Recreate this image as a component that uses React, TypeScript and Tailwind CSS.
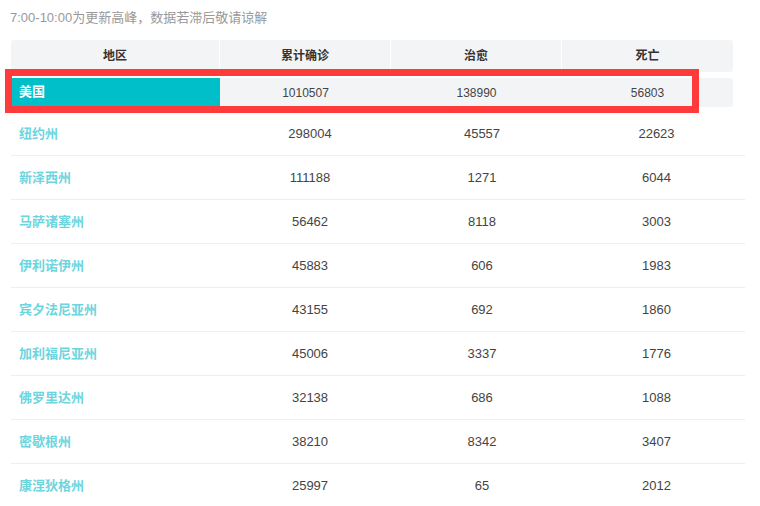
const font = "font-['Liberation_Sans','Noto_Sans_CJK_SC',sans-serif]";

const rows = [
  ["纽约州", "298004", "45557", "22623"],
  ["新泽西州", "111188", "1271", "6044"],
  ["马萨诸塞州", "56462", "8118", "3003"],
  ["伊利诺伊州", "45883", "606", "1983"],
  ["宾夕法尼亚州", "43155", "692", "1860"],
  ["加利福尼亚州", "45006", "3337", "1776"],
  ["佛罗里达州", "32138", "686", "1088"],
  ["密歇根州", "38210", "8342", "3407"],
  ["康涅狄格州", "25997", "65", "2012"],
];

export default function App() {
  return (
    <div className={`relative w-[760px] h-[506px] overflow-hidden bg-white ${font}`}>
      <p className="pl-[10px] pt-[10px] text-[13px] leading-4 text-[#999]">7:00-10:00为更新高峰，数据若滞后敬请谅解</p>

      {/* header */}
      <div className="ml-[11px] mt-[14px] flex w-[722px] h-[32px] gap-px overflow-hidden rounded-[3px] text-[12px] font-bold text-[#333]">
        <div className="w-[208px] bg-[#f3f4f6] flex items-center justify-center">地区</div>
        <div className="w-[170px] bg-[#f3f4f6] flex items-center justify-center">累计确诊</div>
        <div className="w-[170px] bg-[#f3f4f6] flex items-center justify-center">治愈</div>
        <div className="w-[171px] bg-[#f3f4f6] flex items-center justify-center">死亡</div>
      </div>

      {/* country row */}
      <div className="ml-[11px] mt-[6px] flex w-[722px] h-[29px] rounded-[3px] bg-[#f3f4f6] text-[12px] text-[#444]">
        <div className="ml-px w-[208px] h-[28px] bg-[#00bfc9] flex items-center pl-[7px] text-[13px] font-bold text-white">美国</div>
        <div className="w-[171px] flex items-center justify-center">1010507</div>
        <div className="w-[171px] flex items-center justify-center">138990</div>
        <div className="w-[171px] flex items-center justify-center">56803</div>
      </div>

      {/* state rows */}
      <div className="ml-[11px] mt-[5px] w-[734px]">
        {rows.map((r) => (
          <div key={r[0]} className="flex h-[44px] border-b border-[#eeeeee] text-[13px] text-[#444]">
            <div className="w-[213px] flex items-center pl-[8px] font-bold text-[#6dd5de]">{r[0]}</div>
            <div className="w-[172px] flex items-center justify-center">{r[1]}</div>
            <div className="w-[172px] flex items-center justify-center">{r[2]}</div>
            <div className="w-[177px] flex items-center justify-center">{r[3]}</div>
          </div>
        ))}
      </div>

      {/* highlight annotation */}
      <div className="absolute left-[5px] top-[69px] w-[694px] h-[44px] border-[7px] border-[#ff3a3a]" />
    </div>
  );
}
